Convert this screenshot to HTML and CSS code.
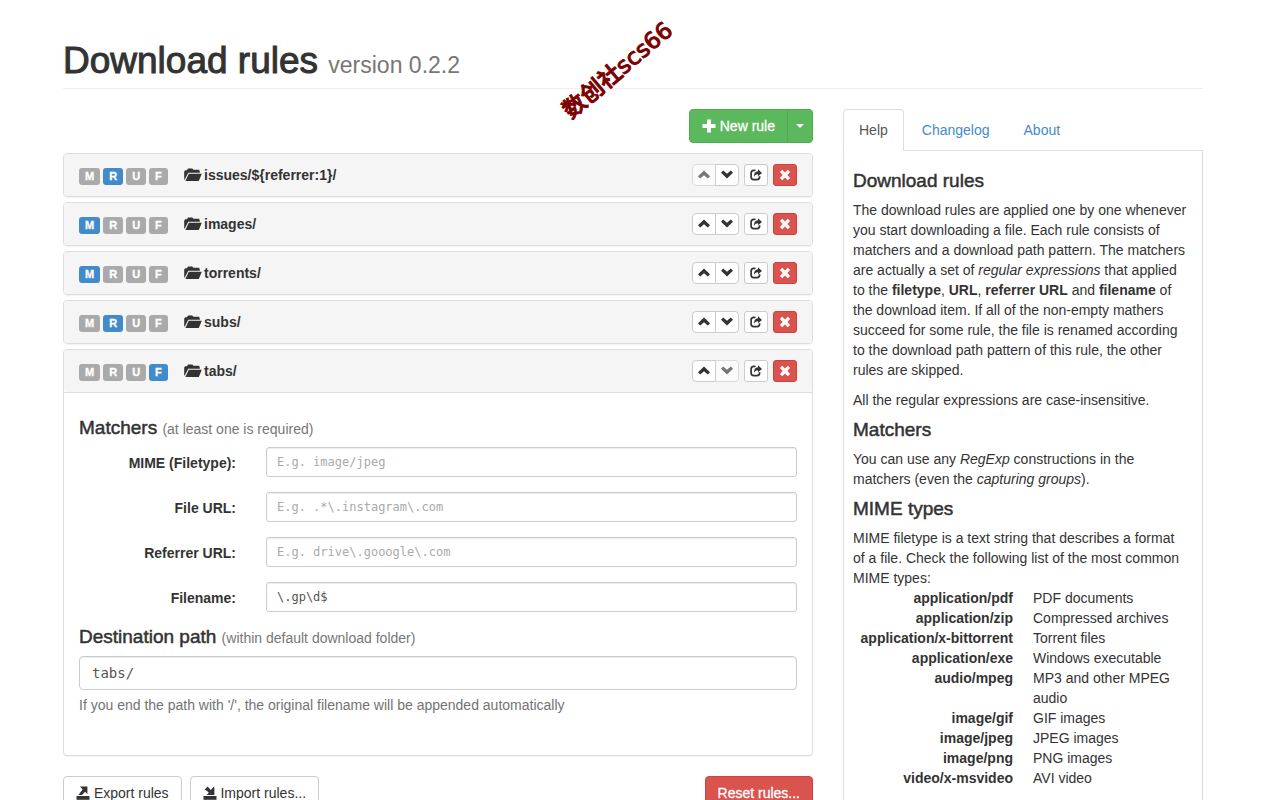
FILE: index.html
```html
<!DOCTYPE html>
<html lang="en">
<head>
    <meta charset="UTF-8">
    <meta name="viewport" content="width=device-width, initial-scale=1.0">
    <title>Download rules</title>
    <link rel="stylesheet" href="styles.css">
</head>
<body>

<!-- Icons -->
<svg class="sprite" aria-hidden="true">
    <symbol id="plus" viewBox="0 0 14 14"><path d="M5 .5h4v4.5h4.5v4H9v4.5H5V9H.5V5H5z"/></symbol>
    <symbol id="up" viewBox="0 0 12 12"><path d="M6 1.6L12 7.2L9.8 9.4L6 6.2L2.2 9.4L0 7.2Z"/></symbol>
    <symbol id="down" viewBox="0 0 12 12"><path d="M6 9.4L0 3.8L2.2 1.6L6 4.8L9.8 1.6L12 3.8Z"/></symbol>
    <symbol id="share" viewBox="0 0 12 12">
        <path d="M5.5 1.4H3.8Q1.1 1.4 1.1 4V8Q1.1 10.6 3.8 10.6H7Q9.6 10.6 9.6 8V7.2" fill="none" stroke="currentColor" stroke-width="1.7"/>
        <path d="M8 .3L12 3.9L8 7.3V5.3Q5.2 5 4 7.8Q3.8 2.6 8 2.3Z"/>
    </symbol>
    <symbol id="remove" viewBox="0 0 12 12"><path d="M3.2 .8L6 3.6L8.8 .8L11.1 3.1L8.3 6L11.1 8.9L8.8 11.2L6 8.4L3.2 11.2L.9 8.9L3.7 6L.9 3.1Z"/></symbol>
    <symbol id="folder" viewBox="0 0 18 14">
        <path d="M.2 3.4L1.2 2.2H3L4 .6H8.4L9.4 1.8H15.2L16 4.8H4.2L.8 11.6H.2Z"/>
        <path d="M4.8 5.8H17.8L14.8 13H1.4Z"/>
    </symbol>
    <symbol id="export" viewBox="0 0 14 14">
        <path d="M.5 10H13.5V13.8H.5Z"/>
        <path d="M4 .5H11.4V8L9 5.7L6 9H2.4L6.6 3.5Z"/>
    </symbol>
    <symbol id="import" viewBox="0 0 14 14">
        <path d="M.5 10H13.5V13.8H.5Z"/>
        <path d="M3 2.2L4.6 .6L7.8 4L10.6 .8L11.4 1.6V9H3.6L5.8 6.8L4.4 5.2L1.6 3.6Z"/>
    </symbol>
</svg>

<div class="watermark">数创社scs66</div>

<div class="container">
    <header class="page-header">
        <h1>Download rules <small>version 0.2.2</small></h1>
    </header>

    <div class="columns">
        <main class="rules">
            <div class="toolbar">
                <div class="btn-group">
                    <button type="button" class="btn btn-success"><svg class="icon"><use href="#plus"/></svg> New rule</button>
                    <button type="button" class="btn btn-success btn-toggle" aria-label="More"><span class="caret"></span></button>
                </div>
            </div>

            <section class="panel">
                <div class="panel-heading">
                    <div class="labels"><span class="label">M</span><span class="label on">R</span><span class="label">U</span><span class="label">F</span></div>
                    <a class="panel-title" href="#"><svg class="icon-folder"><use href="#folder"/></svg>issues/${referrer:1}/</a>
                    <div class="actions">
                        <div class="btn-group">
                            <button type="button" class="btn btn-xs" aria-label="Up" disabled><svg><use href="#up"/></svg></button>
                            <button type="button" class="btn btn-xs" aria-label="Down"><svg><use href="#down"/></svg></button>
                        </div>
                        <button type="button" class="btn btn-xs" aria-label="Share"><svg><use href="#share"/></svg></button>
                        <button type="button" class="btn btn-xs btn-danger" aria-label="Remove"><svg><use href="#remove"/></svg></button>
                    </div>
                </div>
            </section>

            <section class="panel">
                <div class="panel-heading">
                    <div class="labels"><span class="label on">M</span><span class="label">R</span><span class="label">U</span><span class="label">F</span></div>
                    <a class="panel-title" href="#"><svg class="icon-folder"><use href="#folder"/></svg>images/</a>
                    <div class="actions">
                        <div class="btn-group">
                            <button type="button" class="btn btn-xs" aria-label="Up"><svg><use href="#up"/></svg></button>
                            <button type="button" class="btn btn-xs" aria-label="Down"><svg><use href="#down"/></svg></button>
                        </div>
                        <button type="button" class="btn btn-xs" aria-label="Share"><svg><use href="#share"/></svg></button>
                        <button type="button" class="btn btn-xs btn-danger" aria-label="Remove"><svg><use href="#remove"/></svg></button>
                    </div>
                </div>
            </section>

            <section class="panel">
                <div class="panel-heading">
                    <div class="labels"><span class="label on">M</span><span class="label">R</span><span class="label">U</span><span class="label">F</span></div>
                    <a class="panel-title" href="#"><svg class="icon-folder"><use href="#folder"/></svg>torrents/</a>
                    <div class="actions">
                        <div class="btn-group">
                            <button type="button" class="btn btn-xs" aria-label="Up"><svg><use href="#up"/></svg></button>
                            <button type="button" class="btn btn-xs" aria-label="Down"><svg><use href="#down"/></svg></button>
                        </div>
                        <button type="button" class="btn btn-xs" aria-label="Share"><svg><use href="#share"/></svg></button>
                        <button type="button" class="btn btn-xs btn-danger" aria-label="Remove"><svg><use href="#remove"/></svg></button>
                    </div>
                </div>
            </section>

            <section class="panel">
                <div class="panel-heading">
                    <div class="labels"><span class="label">M</span><span class="label on">R</span><span class="label">U</span><span class="label">F</span></div>
                    <a class="panel-title" href="#"><svg class="icon-folder"><use href="#folder"/></svg>subs/</a>
                    <div class="actions">
                        <div class="btn-group">
                            <button type="button" class="btn btn-xs" aria-label="Up"><svg><use href="#up"/></svg></button>
                            <button type="button" class="btn btn-xs" aria-label="Down"><svg><use href="#down"/></svg></button>
                        </div>
                        <button type="button" class="btn btn-xs" aria-label="Share"><svg><use href="#share"/></svg></button>
                        <button type="button" class="btn btn-xs btn-danger" aria-label="Remove"><svg><use href="#remove"/></svg></button>
                    </div>
                </div>
            </section>

            <section class="panel">
                <div class="panel-heading">
                    <div class="labels"><span class="label">M</span><span class="label">R</span><span class="label">U</span><span class="label on">F</span></div>
                    <a class="panel-title" href="#"><svg class="icon-folder"><use href="#folder"/></svg>tabs/</a>
                    <div class="actions">
                        <div class="btn-group">
                            <button type="button" class="btn btn-xs" aria-label="Up"><svg><use href="#up"/></svg></button>
                            <button type="button" class="btn btn-xs" aria-label="Down" disabled><svg><use href="#down"/></svg></button>
                        </div>
                        <button type="button" class="btn btn-xs" aria-label="Share"><svg><use href="#share"/></svg></button>
                        <button type="button" class="btn btn-xs btn-danger" aria-label="Remove"><svg><use href="#remove"/></svg></button>
                    </div>
                </div>
                <form class="panel-body">
                    <h4>Matchers <small>(at least one is required)</small></h4>
                    <div class="form-row">
                        <label for="mime">MIME (Filetype):</label>
                        <input type="text" id="mime" class="input-sm" placeholder="E.g. image/jpeg">
                    </div>
                    <div class="form-row">
                        <label for="url">File URL:</label>
                        <input type="text" id="url" class="input-sm" placeholder="E.g. .*\.instagram\.com">
                    </div>
                    <div class="form-row">
                        <label for="referrer">Referrer URL:</label>
                        <input type="text" id="referrer" class="input-sm" placeholder="E.g. drive\.gooogle\.com">
                    </div>
                    <div class="form-row">
                        <label for="filename">Filename:</label>
                        <input type="text" id="filename" class="input-sm" value="\.gp\d$">
                    </div>
                    <h4><label for="path">Destination path</label> <small>(within default download folder)</small></h4>
                    <input type="text" id="path" value="tabs/">
                    <p class="help-block">If you end the path with '/', the original filename will be appended automatically</p>
                </form>
            </section>

            <div class="footer-buttons">
                <button type="button" class="btn"><svg class="icon"><use href="#export"/></svg> Export rules</button>
                <button type="button" class="btn"><svg class="icon"><use href="#import"/></svg> Import rules...</button>
                <button type="button" class="btn btn-danger">Reset rules...</button>
            </div>
        </main>

        <aside class="sidebar">
            <nav class="tabs">
                <a class="tab active" href="#help">Help</a>
                <a class="tab" href="#changelog">Changelog</a>
                <a class="tab" href="#about">About</a>
            </nav>
            <div id="help" class="tab-content">
                <h4>Download rules</h4>
                <p>The download rules are applied one by one whenever you start downloading a file. Each rule consists of matchers and a download path pattern. The matchers are actually a set of <em>regular expressions</em> that applied to the <b>filetype</b>, <b>URL</b>, <b>referrer URL</b> and <b>filename</b> of the download item. If all of the non-empty mathers succeed for some rule, the file is renamed according to the download path pattern of this rule, the other rules are skipped.</p>
                <p>All the regular expressions are case-insensitive.</p>
                <h4>Matchers</h4>
                <p>You can use any <em>RegExp</em> constructions in the matchers (even the <em>capturing groups</em>).</p>
                <h4>MIME types</h4>
                <div>MIME filetype is a text string that describes a format of a file. Check the following list of the most common MIME types:</div>
                <dl>
                    <dt>application/pdf</dt><dd>PDF documents</dd>
                    <dt>application/zip</dt><dd>Compressed archives</dd>
                    <dt>application/x-bittorrent</dt><dd>Torrent files</dd>
                    <dt>application/exe</dt><dd>Windows executable</dd>
                    <dt>audio/mpeg</dt><dd>MP3 and other MPEG audio</dd>
                    <dt>image/gif</dt><dd>GIF images</dd>
                    <dt>image/jpeg</dt><dd>JPEG images</dd>
                    <dt>image/png</dt><dd>PNG images</dd>
                    <dt>video/x-msvideo</dt><dd>AVI video</dd>
                </dl>
            </div>
        </aside>
    </div>
</div>

</body>
</html>
```
FILE: styles.css
```css
* {
    box-sizing: border-box;
}
body {
    margin: 0;
    padding: 0 14px 0 0;
    font-family: "Helvetica Neue", "Liberation Sans", Arial, sans-serif;
    font-size: 14px;
    line-height: 20px;
    color: #333;
    background: #fff;
}
svg {
    fill: currentColor;
}
.sprite {
    display: none;
}
.container {
    max-width: 1140px;
    margin: 0 auto;
}
.watermark {
    position: absolute;
    left: 550px;
    top: 54px;
    color: #7b0000;
    font: 500 23px/32px "DejaVu Sans", "Noto Sans CJK SC", sans-serif;
    -webkit-text-stroke: 1px #7b0000;
    transform: rotate(-40deg);
}

/* Headings, medium weight */
h1,
h4 {
    font-weight: 500;
    -webkit-text-stroke: 1px #333;
}
h4 {
    margin: 10px 0;
    font-size: 19px;
    line-height: 19px;
    -webkit-text-stroke-width: 0.5px;
}
h1 small,
h4 small {
    font-weight: 400;
    line-height: 1;
    color: #777;
    -webkit-text-stroke: 0;
}
h4 small {
    font-size: 14px;
}
p {
    margin: 0 0 10px;
}
.page-header {
    padding: 41px 0 8px;
    margin-bottom: 20px;
    border-bottom: 1px solid #eee;
}
.page-header h1 {
    margin: 0;
    font-size: 37px;
    line-height: 39px;
}
.page-header small {
    font-size: 23px;
}
.columns {
    display: grid;
    grid-template-columns: 25fr 12fr;
    gap: 30px;
}

/* Buttons */
.btn {
    height: 34px;
    padding: 0 12px;
    border: 1px solid #ccc;
    border-radius: 4px;
    background: #fff;
    color: #333;
    font: inherit;
    cursor: pointer;
}
.btn-success {
    color: #fff;
    background: #5cb85c;
    border-color: #4cae4c;
    -webkit-text-stroke: 0.3px #fff;
}
.btn-danger {
    color: #fff;
    background: #d9534f;
    border-color: #d43f3a;
}
.btn-group {
    display: flex;
}
.btn-group .btn:first-child {
    border-radius: 4px 0 0 4px;
}
.btn-group .btn:last-child {
    margin-left: -1px;
    border-radius: 0 4px 4px 0;
}
.btn-toggle {
    padding: 0 8px;
}
.btn-xs {
    display: flex;
    align-items: center;
    justify-content: center;
    width: 24px;
    height: 22px;
    padding: 0;
    border-radius: 3px;
}
.btn-xs svg {
    width: 12px;
    height: 12px;
}
.btn:disabled {
    opacity: 0.65;
}
.icon {
    width: 14px;
    height: 14px;
    vertical-align: -2px;
}
.caret {
    display: block;
    border: 4px solid transparent;
    border-top-color: #fff;
    border-bottom: 0;
}
.toolbar {
    display: flex;
    justify-content: flex-end;
    margin-bottom: 10px;
}

/* Rules */
.panel {
    margin-bottom: 5px;
    border: 1px solid #ddd;
    border-radius: 4px;
    box-shadow: 0 1px 1px rgba(0,0,0,0.05);
}
.panel-heading {
    display: flex;
    align-items: center;
    padding: 10px 15px;
    background: #f5f5f5;
    border-radius: 3px;
}
.labels {
    display: flex;
    gap: 3px;
    width: 105px;
    padding-top: 3px;
}
.label {
    padding: 0 6px;
    border-radius: 3px;
    background: #aaa;
    color: #fff;
    font-size: 11px;
    font-weight: bold;
    line-height: 17px;
    -webkit-text-stroke: 0.3px #fff;
}
.label.on {
    background: #428bca;
}
.panel-title {
    display: flex;
    align-items: center;
    gap: 2px;
    color: #333;
    font-weight: bold;
    text-decoration: none;
}
.icon-folder {
    width: 18px;
    height: 14px;
}
.actions {
    display: flex;
    gap: 5px;
    margin-left: auto;
}
.panel-body {
    padding: 15px;
    border-top: 1px solid #ddd;
}

/* Form */
.form-row {
    display: grid;
    grid-template-columns: 157px 1fr;
    gap: 30px;
    margin-bottom: 15px;
}
.form-row label {
    padding-top: 6px;
    font-weight: bold;
    text-align: right;
}
input {
    width: 100%;
    height: 34px;
    padding: 0 12px;
    border: 1px solid #ccc;
    border-radius: 4px;
    box-shadow: inset 0 1px 1px rgba(0,0,0,0.075);
    color: #555;
    font: 14px "DejaVu Sans Mono", monospace;
}
.input-sm {
    height: 30px;
    padding: 0 10px;
    border-radius: 3px;
    font-size: 12px;
}
input::placeholder {
    color: #aaa;
}
.help-block {
    margin: 5px 0 25px;
    color: #737373;
}
.footer-buttons {
    display: flex;
    gap: 8px;
    margin: 20px 0;
}
.footer-buttons .btn-danger {
    margin-left: auto;
    -webkit-text-stroke: 0.3px #fff;
}

/* Sidebar */
.sidebar {
    display: flex;
    flex-direction: column;
}
.tabs {
    display: flex;
    gap: 2px;
    border-bottom: 1px solid #ddd;
}
.tab {
    padding: 10px 15px;
    margin-bottom: -1px;
    border: 1px solid transparent;
    border-radius: 4px 4px 0 0;
    color: #428bca;
    text-decoration: none;
}
.tab.active {
    color: #555;
    background: #fff;
    border-color: #ddd #ddd #fff;
}
.tab-content {
    flex: 1;
    padding: 10px 14px 10px 9px;
    border: 1px solid #ddd;
    border-top: 0;
}
dl {
    display: grid;
    grid-template-columns: 160px 1fr;
    column-gap: 20px;
    margin: 0 0 20px;
}
dt {
    font-weight: bold;
    text-align: right;
}
dd {
    margin: 0;
}
```
